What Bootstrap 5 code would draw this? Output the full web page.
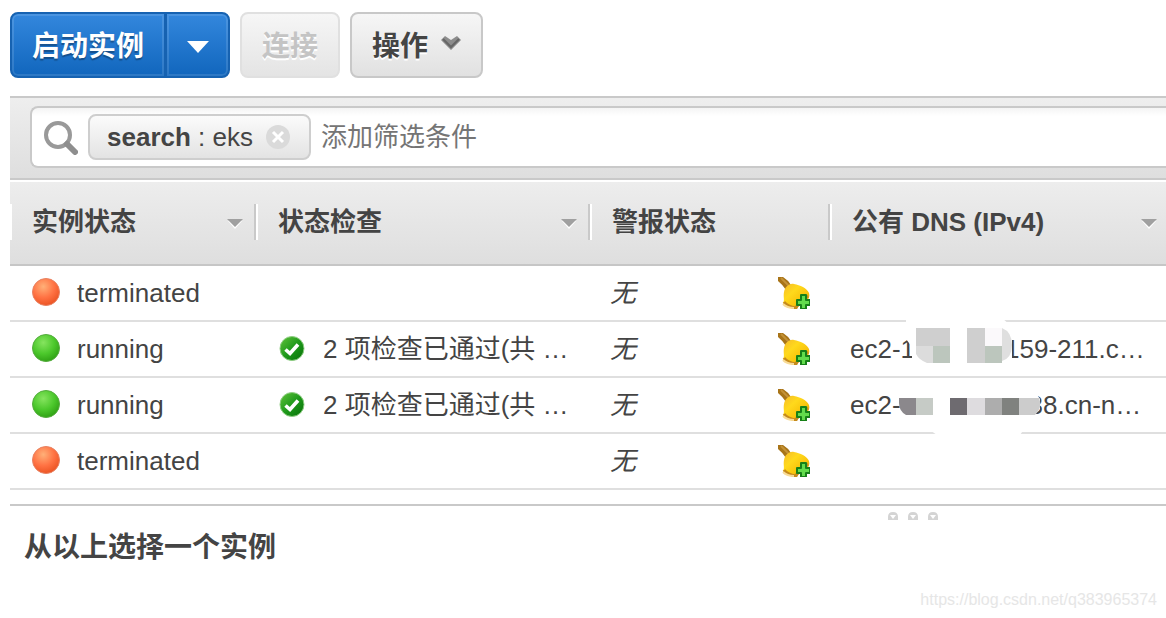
<!DOCTYPE html>
<html lang="zh-CN">
<head>
<meta charset="utf-8">
<meta name="viewport" content="width=device-width, initial-scale=1">
<title>EC2 实例</title>
<link href="https://cdn.jsdelivr.net/npm/bootstrap@5.3.0/dist/css/bootstrap.min.css" rel="stylesheet">
<style>
body { font-family: "Liberation Sans", "Noto Sans CJK SC", sans-serif; font-size: 26px; line-height: 32px; color: #444; background: #fff; overflow-x: hidden; }
.console { padding: 12px 0 0 10px; }
.actions { gap: 10px; margin-bottom: 18px; }
.actions .btn { height: 66px; font-size: 28px; line-height: 32px; font-weight: 700; border-width: 2px; border-radius: 8px; padding: 4px 20px 0; }
.actions .btn-launch { color: #fff; border-color: #1662b1; background: linear-gradient(#3387dd, #1166bd); box-shadow: inset 0 0 0 2px rgba(255,255,255,.12); text-shadow: 0 2px 1px rgba(0,0,0,.3); }
.actions .btn-launch-menu { width: 65px; padding: 4px 0 0; margin-left: -2px; }
.actions .btn-grey { color: #444; border-color: #c8c8c8; background: linear-gradient(#f6f6f6, #e1e1e1); text-shadow: 0 2px 0 #fff; }
.actions .btn-grey:disabled { color: #c4c4c4; border-color: #e0e0e0; background: linear-gradient(#f6f6f6, #e4e4e4); opacity: 1; }
.btn-actions { gap: 13px; }
.filter-bar { height: 84px; padding: 8px 0 0 20px; border-top: 2px solid #c9c9c9; border-bottom: 2px solid #c9c9c9; background: linear-gradient(#eeeeee, #dedede); }
.filter-box { height: 62px; border: 2px solid #c9c9c9; border-right: 0; border-radius: 8px 0 0 8px; background: linear-gradient(#f4f4f4, #fff 8px); padding-left: 10px; }
.filter-tag { height: 46px; padding: 0 19px 0 17px; margin-left: 10px; border: 2px solid #cecece; border-radius: 8px; background: linear-gradient(#fbfbfb, #e3e3e3); white-space: nowrap; }
.tag-close { margin-left: 13px; line-height: 0; }
.filter-input { min-width: 0; padding: 0 10px; border: 0; background: transparent; outline: 0; color: #444; }
.filter-input::placeholder { color: #757575; opacity: 1; }
.instances { table-layout: fixed; width: 100%; margin-top: 2px; border-collapse: separate; border-spacing: 0; }
.col-state { width: 246px; }
.col-check { width: 334px; }
.col-alarm { width: 240px; }
.instances th { height: 84px; padding: 0; border-bottom: 2px solid #c6c6c6; }
.instances thead { background: linear-gradient(#ededed, #dedede); }
.head-cell { height: 36px; padding: 0 11px 0 20px; border-left: 2px solid #fff; border-right: 2px solid #c9c9c9; white-space: nowrap; margin-bottom: 2px; }
.head-cell svg { margin-top: 4px; }
th:last-child .head-cell { border-right-color: transparent; padding-right: 7px; }
.instances td { height: 56px; padding: 0 20px; border-bottom: 2px solid #dfdfdf; white-space: nowrap; }
.cell-state { gap: 16px; padding-left: 1px; }
.cell-check { gap: 18px; padding-left: 3px; }
.cover { position: relative; align-self: stretch; height: 32px; }
.cover svg { position: absolute; overflow: visible; left: 0; top: 0; }
.cover-a { width: 90px; }
.cover-b { width: 128px; }
.detail { margin-top: 14px; border-top: 2px solid #c9c9c9; }
.grip { height: 22px; padding: 6px 227px 0 0; gap: 8px; line-height: 0; }
.detail h2 { margin: 4px 0 0; padding-left: 14px; font-size: 28px; line-height: 32px; font-weight: 700; }
.page-url { margin-top: 26px; padding-right: 9px; font-size: 16px; line-height: 20px; }
.page-url a { color: #e6e6e6; }
</style>
</head>
<body>
<svg width="0" height="0" class="position-absolute" aria-hidden="true">
  <defs>
    <radialGradient id="redFill" cx=".4" cy=".3" r=".75"><stop offset="0" stop-color="#ffb078"/><stop offset=".55" stop-color="#ff7243"/><stop offset="1" stop-color="#e9501f"/></radialGradient>
    <radialGradient id="greenFill" cx=".4" cy=".3" r=".75"><stop offset="0" stop-color="#86e45f"/><stop offset=".55" stop-color="#4cc82c"/><stop offset="1" stop-color="#2c9d12"/></radialGradient>
    <linearGradient id="okFill" x1="0" y1="0" x2="1" y2="1"><stop offset="0" stop-color="#63c43c"/><stop offset=".5" stop-color="#1f9a1b"/><stop offset="1" stop-color="#067008"/></linearGradient>
    <linearGradient id="bellFill" x1="0" y1="0" x2="1" y2="1"><stop offset="0" stop-color="#f5b92a"/><stop offset=".35" stop-color="#ffd91c"/><stop offset=".65" stop-color="#f9c40c"/><stop offset="1" stop-color="#c98512"/></linearGradient>
    <symbol id="dotRed" viewBox="0 0 30 30"><circle cx="15" cy="14" r="13.5" fill="url(#redFill)" stroke="#e88262"/></symbol>
    <symbol id="dotGreen" viewBox="0 0 30 30"><circle cx="15" cy="14" r="13.5" fill="url(#greenFill)" stroke="#55ac3e"/></symbol>
    <symbol id="ok" viewBox="0 0 26 26"><circle cx="13" cy="12.5" r="12" fill="url(#okFill)" stroke="#8fce83"/><path d="M6.500 13.500l4.500 4L19 8.500" fill="none" stroke="#fff" stroke-width="3.6"/></symbol>
    <symbol id="bell" viewBox="0 0 32 32">
      <path d="M0 0h5q5 3 8 8l-5 5Q5 8 0 4z" fill="#a87418"/><path d="M3 1l8 8" stroke="#c49238" stroke-width="2"/>
      <path d="M6 15c1-5 5-9 10-8 6 1 13 4 15 9 1 3 0 6-3 9l-10 6c-4 1-10-2-13-5 2-3 0-6 1-11z" fill="url(#bellFill)"/>
      <path d="M6 25c2 3 6 5 12 6 2-5 6-9 12-12" fill="none" stroke="#c58a1c" stroke-width="3"/>
      <path d="M5 27c2 2 6 4 11 4" fill="none" stroke="#f8dc98" stroke-width="2"/>
      <path d="M23 18h5v5h4v5h-4v4h-5v-4h-4v-5h4z" fill="#62dc4c" stroke="#178018" stroke-width="2" stroke-linejoin="round"/>
    </symbol>
    <symbol id="sort" viewBox="0 0 16 12"><path d="M1 3h14l-7 8z" fill="#fff"/><path d="M0 1h16L8 9z" fill="#a0a0a0"/></symbol>
    <symbol id="gripDot" viewBox="0 0 12 10"><path d="M1 8V5q0-5 5-5t5 5v3z" fill="#d4d4d4"/><path d="M3 3h6L6 7z" fill="#fff"/></symbol>
  </defs>
</svg>

<main class="console">
  <div class="actions d-flex">
    <div class="btn-group">
      <button type="button" class="btn btn-launch">启动实例</button>
      <button type="button" class="btn btn-launch btn-launch-menu" aria-label="更多启动选项"><svg class="d-block mx-auto" width="24" height="14" viewBox="0 0 24 14"><path d="M1 1h22L12 13z" fill="#fff"/></svg></button>
    </div>
    <button type="button" class="btn btn-grey" disabled>连接</button>
    <button type="button" class="btn btn-grey btn-actions d-flex align-items-center">操作<svg class="mb-2" width="20" height="14" viewBox="0 0 20 14"><path d="M0 4l4-4 6 4 6-4 4 4-10 10z" fill="#8c8c8c"/><path d="M2 3l8 8 8-8" fill="none" stroke="#666" stroke-width="2"/></svg></button>
  </div>

  <div class="filter-bar">
    <div class="filter-box d-flex align-items-center">
      <svg class="flex-shrink-0" width="36" height="36" viewBox="0 0 36 36"><circle cx="16" cy="16" r="12" fill="none" stroke="#999" stroke-width="4"/><path d="M25 25l8 8" stroke="#8e8e8e" stroke-width="6" stroke-linecap="round"/></svg>
      <div class="filter-tag d-flex align-items-center"><span><b>search</b> : eks</span>
        <button type="button" class="tag-close btn p-0 border-0" aria-label="移除"><svg width="24" height="24" viewBox="0 0 24 24"><circle cx="12" cy="12" r="12" fill="#dadada"/><path d="M7 7l10 10M17 7L7 17" stroke="#fff" stroke-width="3"/></svg></button>
      </div>
      <input class="filter-input flex-grow-1" type="text" placeholder="添加筛选条件" aria-label="添加筛选条件">
    </div>
  </div>

  <table class="instances">
    <colgroup><col class="col-state"><col class="col-check"><col class="col-alarm"><col></colgroup>
    <thead>
      <tr>
        <th><div class="head-cell d-flex align-items-center justify-content-between">实例状态<svg width="16" height="12"><use href="#sort"/></svg></div></th>
        <th><div class="head-cell d-flex align-items-center justify-content-between">状态检查<svg width="16" height="12"><use href="#sort"/></svg></div></th>
        <th><div class="head-cell d-flex align-items-center">警报状态</div></th>
        <th><div class="head-cell d-flex align-items-center justify-content-between">公有 DNS (IPv4)<svg width="16" height="12"><use href="#sort"/></svg></div></th>
      </tr>
    </thead>
    <tbody>
      <tr>
        <td><div class="cell-state d-flex align-items-center"><svg width="30" height="30"><use href="#dotRed"/></svg>terminated</div></td>
        <td></td>
        <td><div class="d-flex align-items-center justify-content-between"><i>无</i><svg width="32" height="32"><use href="#bell"/></svg></div></td>
        <td></td>
      </tr>
      <tr>
        <td><div class="cell-state d-flex align-items-center"><svg width="30" height="30"><use href="#dotGreen"/></svg>running</div></td>
        <td><div class="cell-check d-flex align-items-center"><svg width="26" height="26"><use href="#ok"/></svg>2 项检查已通过(共 …</div></td>
        <td><div class="d-flex align-items-center justify-content-between"><i>无</i><svg width="32" height="32"><use href="#bell"/></svg></div></td>
        <td><div class="d-flex align-items-center">ec2-1<span class="cover cover-a"><svg width="96" height="32" viewBox="0 0 96 32"><path d="M-9-16H86L97-6V28L88 36H6L-3 28V14L-9 6z" fill="#fff"/><path d="M1-5h34v18H1zM52-5h18v35H52z" fill="#cfcfcf"/><path d="M1 13h17v17H12Q4 27 1 21z" fill="#dcdcdc"/><path d="M18 13h17v17H18zM70 13h17v17H70z" fill="#bcc6bd"/><path d="M70-5h17v18H70z" fill="#fbf9fb"/><path d="M87-5q10 4 10 17T87 28z" fill="#dfdfdf"/></svg></span>159-211.c…</div></td>
      </tr>
      <tr>
        <td><div class="cell-state d-flex align-items-center"><svg width="30" height="30"><use href="#dotGreen"/></svg>running</div></td>
        <td><div class="cell-check d-flex align-items-center"><svg width="26" height="26"><use href="#ok"/></svg>2 项检查已通过(共 …</div></td>
        <td><div class="d-flex align-items-center justify-content-between"><i>无</i><svg width="32" height="32"><use href="#bell"/></svg></div></td>
        <td><div class="d-flex align-items-center">ec2-<span class="cover cover-b"><svg width="140" height="32" viewBox="0 0 140 32"><path d="M4 0H132L139 10V20L130 30L119 46H36L10 28z" fill="#fff"/><path d="M-2 9h17v17H5Q-2 22-2 14z" fill="#8b888c"/><path d="M15 9h17v17H15z" fill="#c6cbc6"/><path d="M49 9h17v17H49z" fill="#6e6b70"/><path d="M66 9h18v17H66z" fill="#dedcdf"/><path d="M84 9h17v17H84z" fill="#adadad"/><path d="M101 9h17v17h-17z" fill="#80827f"/><path d="M118 9h20q4 9-4 17h-16z" fill="#cccccc"/></svg></span>38.cn-n…</div></td>
      </tr>
      <tr>
        <td><div class="cell-state d-flex align-items-center"><svg width="30" height="30"><use href="#dotRed"/></svg>terminated</div></td>
        <td></td>
        <td><div class="d-flex align-items-center justify-content-between"><i>无</i><svg width="32" height="32"><use href="#bell"/></svg></div></td>
        <td></td>
      </tr>
    </tbody>
  </table>

  <section class="detail">
    <div class="grip d-flex justify-content-end"><svg width="12" height="10"><use href="#gripDot"/></svg><svg width="12" height="10"><use href="#gripDot"/></svg><svg width="12" height="10"><use href="#gripDot"/></svg></div>
    <h2>从以上选择一个实例</h2>
    <div class="page-url d-flex justify-content-end"><a class="text-decoration-none" href="https://blog.csdn.net/q383965374">https://blog.csdn.net/q383965374</a></div>
  </section>
</main>
<script src="https://cdn.jsdelivr.net/npm/bootstrap@5.3.0/dist/js/bootstrap.bundle.min.js"></script>
</body>
</html>
